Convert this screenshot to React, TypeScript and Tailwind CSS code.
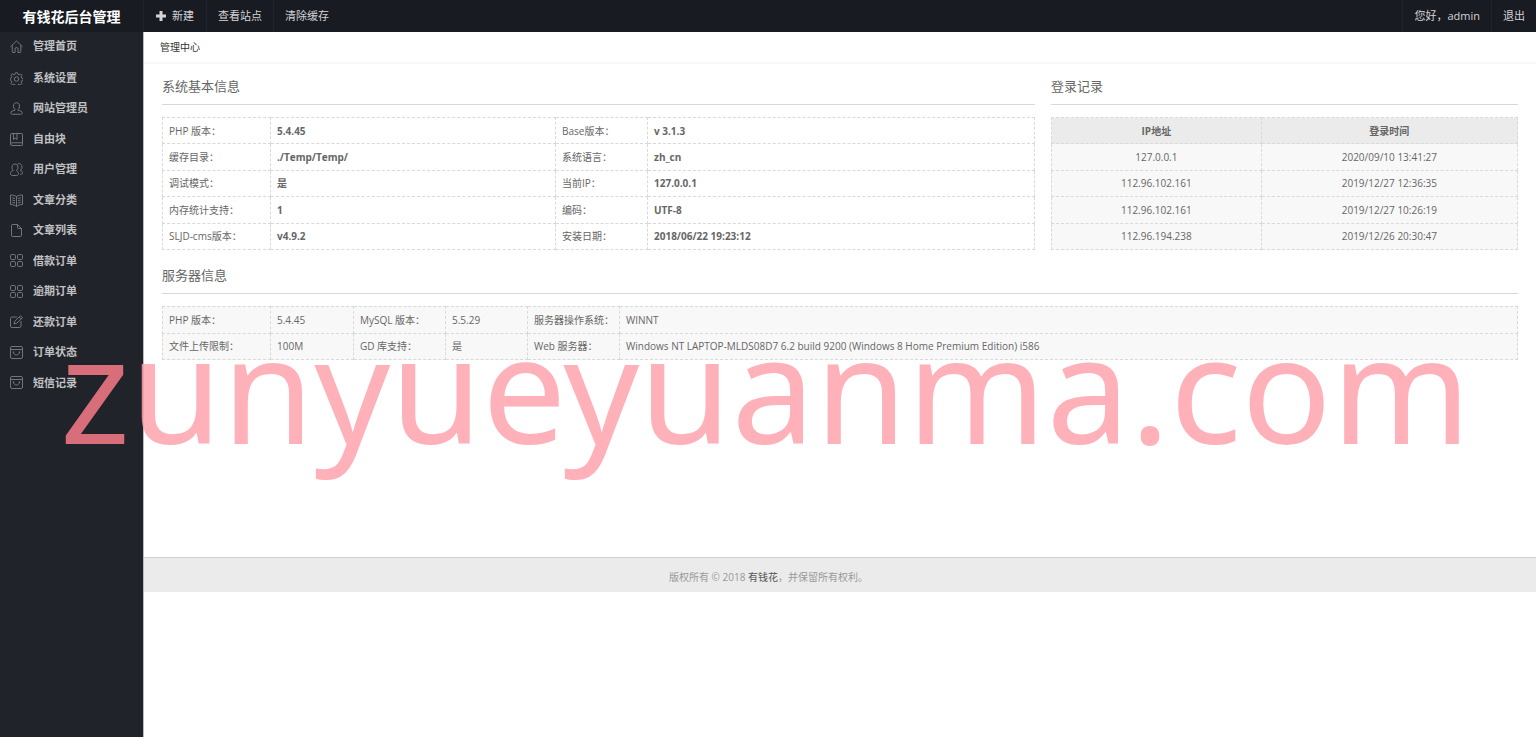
import type { ReactNode } from 'react';

const icons: Record<string, ReactNode> = {
  home: (
    <>
      <path d="M1 13.500 13 2l12 11.500" />
      <path d="M4.500 11v12.500a1.500 1.500 0 0 0 1.500 1.500h4v-7a3 3 0 0 1 6 0v7h4a1.500 1.500 0 0 0 1.500-1.500V11" />
    </>
  ),
  gear: (
    <>
      <path d="M11 1.500h4l.8 3.200 2.400 1 2.900-1.700 2.800 2.800-1.700 2.900 1 2.400 3 .9v4l-3 .8-1 2.400 1.700 2.900-2.800 2.800-2.900-1.700-2.400 1-.8 2.300h-4l-.8-2.300-2.400-1-2.900 1.700L2.100 23l1.700-2.900-1-2.300L.8 16.500v-4l2-.8 1-2.400L2.100 6.500l2.800-2.800 2.900 1.700 2.400-1z" />
      <circle cx="13" cy="14" r="4.500" />
    </>
  ),
  user: (
    <path d="M13 1.500c-4 0-6 3-6 6.500 0 3 1 5.500 3 7v1.500c-5 1-8.500 2.500-8.500 5 0 2 1.500 3 3.500 3h16c2 0 3.500-1 3.500-3 0-2.500-3.500-4-8.500-5V15c2-1.500 3-4 3-7 0-3.500-2-6.500-6-6.500z" />
  ),
  block: (
    <>
      <path d="M4 1h19.500A1.500 1.500 0 0 1 25 2.500v21a1.500 1.500 0 0 1-1.500 1.500H4a3 3 0 0 1-3-3V4a3 3 0 0 1 3-3z" />
      <path d="M1.500 21a3 3 0 0 1 2.500-1.500h21M7 1v12l3.500-3 3.500 3V1" />
    </>
  ),
  users: (
    <>
      <path d="M10 2C6.500 2 4 4.500 4 8.500S5.500 14 6.500 15C3 16 1 18 1 21c0 2.500 1.500 4 4 4h8c2.500 0 4-1.500 4-4s-2-5-4.500-6C14 14 16 12 16 8.500S13.500 2 10 2z" />
      <path d="M15 2c5-2 9 1 9 6 0 3-1.500 5-3.500 6.500C23 15.500 25 17 25 19.500c0 2-1.500 3-3.500 3H20" />
    </>
  ),
  book: (
    <>
      <path d="M13 5C10 3 6 2 1 2v19c5 0 9 1.500 12 4 3-2.500 7-4 12-4V2c-5 0-9 1-12 3zv20" />
      <path d="M4.500 7.500 10 9M4.500 12l5.500 1.500M4.500 16.500 10 18M21.500 7.500 16 9M21.500 12 16 13.500M21.500 16.500 16 18" />
    </>
  ),
  file: (
    <>
      <path d="M15 1H5a2 2 0 0 0-2 2v20a2 2 0 0 0 2 2h16a2 2 0 0 0 2-2V9z" />
      <path d="M15 1v6a2 2 0 0 0 2 2h6" />
    </>
  ),
  grid: (
    <>
      <rect x="1" y="1" width="10" height="10" rx="2.500" />
      <rect x="15" y="1" width="10" height="10" rx="2.500" />
      <rect x="1" y="15" width="10" height="10" rx="2.500" />
      <rect x="15" y="15" width="10" height="10" rx="2.500" />
    </>
  ),
  edit: (
    <>
      <path d="M14 4H4a3 3 0 0 0-3 3v15a3 3 0 0 0 3 3h15a3 3 0 0 0 3-3V12" />
      <path d="m8 18 1.500-5.500L21 1.500 25 5.500 13.500 16.500zM18.500 4l4 4" />
    </>
  ),
  box: (
    <>
      <rect x="1" y="1" width="24" height="24" rx="3" />
      <path d="M1 7h24M7 12c0 8 12 8 12 0M5.500 12h3M17.500 12h3" />
    </>
  ),
};

const menu = [
  { icon: 'gear', label: '系统设置' },
  { icon: 'user', label: '网站管理员' },
  { icon: 'block', label: '自由块' },
  { icon: 'users', label: '用户管理' },
  { icon: 'book', label: '文章分类' },
  { icon: 'file', label: '文章列表' },
  { icon: 'grid', label: '借款订单' },
  { icon: 'grid', label: '逾期订单' },
  { icon: 'edit', label: '还款订单' },
  { icon: 'box', label: '订单状态' },
  { icon: 'box', label: '短信记录' },
];

const system = [
  ['PHP 版本：', '5.4.45', 'Base版本：', 'v 3.1.3'],
  ['缓存目录：', './Temp/Temp/', '系统语言：', 'zh_cn'],
  ['调试模式：', '是', '当前IP：', '127.0.0.1'],
  ['内存统计支持：', '1', '编码：', 'UTF-8'],
  ['SLJD-cms版本：', 'v4.9.2', '安装日期：', '2018/06/22 19:23:12'],
];

const logins = [
  ['127.0.0.1', '2020/09/10 13:41:27'],
  ['112.96.102.161', '2019/12/27 12:36:35'],
  ['112.96.102.161', '2019/12/27 10:26:19'],
  ['112.96.194.238', '2019/12/26 20:30:47'],
];

const server = [
  ['PHP 版本：', '5.4.45', 'MySQL 版本：', '5.5.29', '服务器操作系统：', 'WINNT'],
  [
    '文件上传限制：',
    '100M',
    'GD 库支持：',
    '是',
    'Web 服务器：',
    'Windows NT LAPTOP-MLDS08D7 6.2 build 9200 (Windows 8 Home Premium Edition) i586',
  ],
];

const cell = 'border border-dashed border-[#d9d9d9] px-[6px] pt-px whitespace-nowrap';

function MenuItem({ icon, label }: { icon: string; label: string }) {
  return (
    <a href="#" className="flex h-full items-center gap-[10px] pl-[10px] text-[11px] font-bold text-[#c0c1c3]">
      <svg
        viewBox="0 0 26 26"
        className="h-[13px] w-[13px] text-[#7d7f83]"
        fill="none"
        stroke="currentColor"
        strokeWidth="1.800"
        strokeLinejoin="round"
      >
        {icons[icon]}
      </svg>
      {label}
    </a>
  );
}

function SectionTitle({ children }: { children: ReactNode }) {
  return (
    <h3 className="mb-3 flex h-[35px] items-center border-b border-[#d9d9d9] text-[13px] text-[#666]">{children}</h3>
  );
}

export default function App() {
  return (
    <div className="relative flex min-h-screen flex-col overflow-hidden bg-white font-['Open_Sans','Noto_Sans_CJK_SC',sans-serif] text-[10px] text-[#666]">
      <header className="flex h-8 bg-[#181b22] text-[11px] text-[#d4d4d6]">
        <h1 className="flex w-[143px] items-center justify-center text-[14px] font-bold text-white">有钱花后台管理</h1>
        <nav className="flex flex-1">
          <a href="#" className="flex items-center gap-[6px] border-l border-[#20232b] px-3">
            <svg viewBox="0 0 10 10" className="h-[10px] w-[10px]" fill="currentColor">
              <path d="M3.500 0h3v3.500H10v3H6.500V10h-3V6.500H0v-3h3.500z" />
            </svg>
            新建
          </a>
          <a href="#" className="flex items-center border-l border-[#20232b] px-[11px]">
            查看站点
          </a>
          <a href="#" className="flex items-center border-l border-[#20232b] px-[11px]">
            清除缓存
          </a>
          <a href="#" className="ml-auto flex items-center border-l border-[#20232b] px-[11px]">
            您好，admin
          </a>
          <a href="#" className="flex items-center border-l border-[#20232b] px-[11px]">
            退出
          </a>
        </nav>
      </header>

      <div className="flex flex-1">
        <aside className="w-[143px] shrink-0 bg-[#20232a]">
          <div className="mb-[3px] h-7">
            <MenuItem icon="home" label="管理首页" />
          </div>
          <ul className="flex h-[335px] flex-col">
            {menu.map((item) => (
              <li key={item.label} className="flex-1">
                <MenuItem icon={item.icon} label={item.label} />
              </li>
            ))}
          </ul>
        </aside>

        <main className="min-w-0 flex-1 border-l border-[#b9babc]">
          <div className="flex h-8 items-center border-b-2 border-[#f7f7f7] pl-4 text-[#333]">管理中心</div>

          <div className="min-h-[493px] px-[18px] pt-[6px]">
            <div className="flex gap-4">
              <section className="flex-[873]">
                <SectionTitle>系统基本信息</SectionTitle>
                <table className="h-[133px] w-full table-fixed border-collapse">
                  <colgroup>
                    <col className="w-[108px]" />
                    <col className="w-[285px]" />
                    <col className="w-[92px]" />
                    <col />
                  </colgroup>
                  <tbody>
                    {system.map((row) => (
                      <tr key={row[0]}>
                        {row.map((text, i) => (
                          <td key={i} className={i % 2 ? `${cell} font-bold` : cell}>
                            {text}
                          </td>
                        ))}
                      </tr>
                    ))}
                  </tbody>
                </table>
              </section>

              <section className="flex-[467]">
                <SectionTitle>登录记录</SectionTitle>
                <table className="h-[133px] w-full table-fixed border-collapse bg-[#f8f8f8] text-center">
                  <thead>
                    <tr className="h-[26px] bg-[#ebebeb]">
                      <th className={`${cell} w-[45%]`}>IP地址</th>
                      <th className={cell}>登录时间</th>
                    </tr>
                  </thead>
                  <tbody>
                    {logins.map(([ip, time]) => (
                      <tr key={time}>
                        <td className={cell}>{ip}</td>
                        <td className={cell}>{time}</td>
                      </tr>
                    ))}
                  </tbody>
                </table>
              </section>
            </div>

            <section className="mt-[9px]">
              <SectionTitle>服务器信息</SectionTitle>
              <table className="h-[54px] w-full table-fixed border-collapse bg-[#f8f8f8]">
                <colgroup>
                  <col className="w-[108px]" />
                  <col className="w-[83px]" />
                  <col className="w-[92px]" />
                  <col className="w-[82px]" />
                  <col className="w-[92px]" />
                  <col />
                </colgroup>
                <tbody>
                  {server.map((row) => (
                    <tr key={row[0]}>
                      {row.map((text) => (
                        <td key={text} className={cell}>
                          {text}
                        </td>
                      ))}
                    </tr>
                  ))}
                </tbody>
              </table>
            </section>
          </div>

          <footer className="flex h-[35px] items-center justify-center border-t border-[#d0d0d0] bg-[#ebebeb] pt-1 pr-[143px] text-[#999]">
            <p>
              版权所有 © 2018{' '}
              <a href="#" className="text-[#555]">
                有钱花
              </a>
              ，并保留所有权利。
            </p>
          </footer>
        </main>
      </div>

      <p className="pointer-events-none absolute top-[347px] left-[60px] font-['Noto_Sans',sans-serif] text-[149px] leading-[80px] whitespace-nowrap text-[rgba(255,161,172,0.83)]">
        <span className="text-[rgba(255,125,140,0.83)]">z</span>unyueyuanma.com
      </p>
    </div>
  );
}
